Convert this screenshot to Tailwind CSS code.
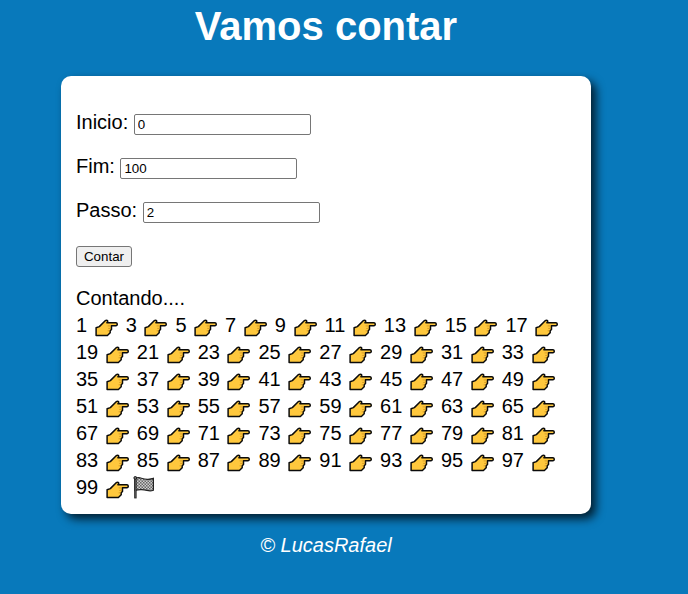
<!DOCTYPE html>
<html lang="pt-br">
<head>
<meta charset="UTF-8">
<title>Vamos contar</title>
<script src="https://cdn.jsdelivr.net/npm/@tailwindcss/browser@4"></script>
</head>
<body class="h-[594px] overflow-hidden bg-[#0879bb] font-['Liberation_Sans',Arial,sans-serif] text-[20px] leading-[22px] text-black">
<svg class="absolute h-0 w-0">
  <symbol id="hand" viewBox="0 0 27.46 20">
    <path d="M3.1 9.8L6.3 8.6L12.2 2.7Q13.6 1.8 14.6 2.6Q15.2 3.4 13.9 4.8H23Q24.3 5.1 24.3 6.3Q24.3 7.6 23 7.8H18.5V11.5L17.2 12.8V14.8L14.4 17.5H3.1Z" fill="#ffc83d" stroke="#0b0b0b" stroke-width="1.5" stroke-linejoin="round"/>
    <path d="M14.6 7.9H17.8M15.2 10.4H17.8M14.6 12.8H16.6" stroke="#c58a1c" stroke-width=".7" fill="none"/>
  </symbol>
  <pattern id="check" width="3" height="3" patternUnits="userSpaceOnUse">
    <path d="M0 0h3v3H0z" fill="#d0d0d0"/><path d="M0 0h1.5v1.5H0zM1.5 1.5H3V3H1.5z" fill="#666"/>
  </pattern>
</svg>
<div class="w-[652px]">
  <header class="pt-[3px] text-center text-white">
    <h1 class="text-[40px] leading-[46px] font-bold">Vamos contar</h1>
  </header>
  <section class="mx-auto mt-[27px] h-[438px] w-[530px] rounded-[10px] bg-white px-[15px] pt-[35px] shadow-[5px_5px_10px_rgba(0,0,0,0.75)]">
    <p class="mb-[22px] flex h-[22px] gap-[5.5px]"><label>Inicio:</label><input type="text" value="0" class="mt-[3px] h-[21px] w-[177px] rounded-[2px] border border-[#767676] bg-white px-[3px] text-[13.333px] leading-normal"></p>
    <p class="mb-[22px] flex h-[22px] gap-[5.5px]"><label>Fim:</label><input type="text" value="100" class="mt-[3px] h-[21px] w-[177px] rounded-[2px] border border-[#767676] bg-white px-[3px] text-[13.333px] leading-normal"></p>
    <p class="mb-[25px] flex h-[22px] gap-[5.5px]"><label>Passo:</label><input type="text" value="2" class="mt-[3px] h-[21px] w-[177px] rounded-[2px] border border-[#767676] bg-white px-[3px] text-[13.333px] leading-normal"></p>
    <button class="block h-[21px] w-[56px] rounded-[3px] border border-[#767676] bg-[#efefef] text-[13.333px] leading-[19px]">Contar</button>
    <div class="mt-[20px] leading-[22px]">Contando....</div>
    <div id="res" class="mt-[3px] leading-[27px]"></div>
  </section>
  <footer class="mt-[20px] text-center text-white italic">© LucasRafael</footer>
</div>
<script>
  const hand = '<svg class="inline-block h-[20px] w-[27.46px] align-[-6px]"><use href="#hand"/></svg>';
  const flag = '<svg class="-my-1 inline-block h-[24px] w-[27.46px] align-[-5px]" viewBox="0 0 27.46 24"><path d="M4 2.6Q7 1 10.4 2.2T17 3.3T22.4 2.4V14.2Q19.6 15.4 16 14.4T9.6 13.6T4 14.4Z" fill="url(#check)" stroke="#222" stroke-width="1.2"/><path d="M4.4 1.5V22.4" stroke="#1b1b1b" stroke-width="2.4"/><path d="M4.4 3V21.6" stroke="#666" stroke-width=".8"/><circle cx="4.3" cy="1.9" r="1.4" fill="#777" stroke="#1b1b1b"/></svg>';
  const parts = [];
  for (let c = 1; c < 100; c += 2) parts.push(c + ' ' + hand);
  document.getElementById('res').innerHTML = parts.join(' ') + '<span class="relative -top-[3px]">' + flag + '</span>';
</script>
</body>
</html>
